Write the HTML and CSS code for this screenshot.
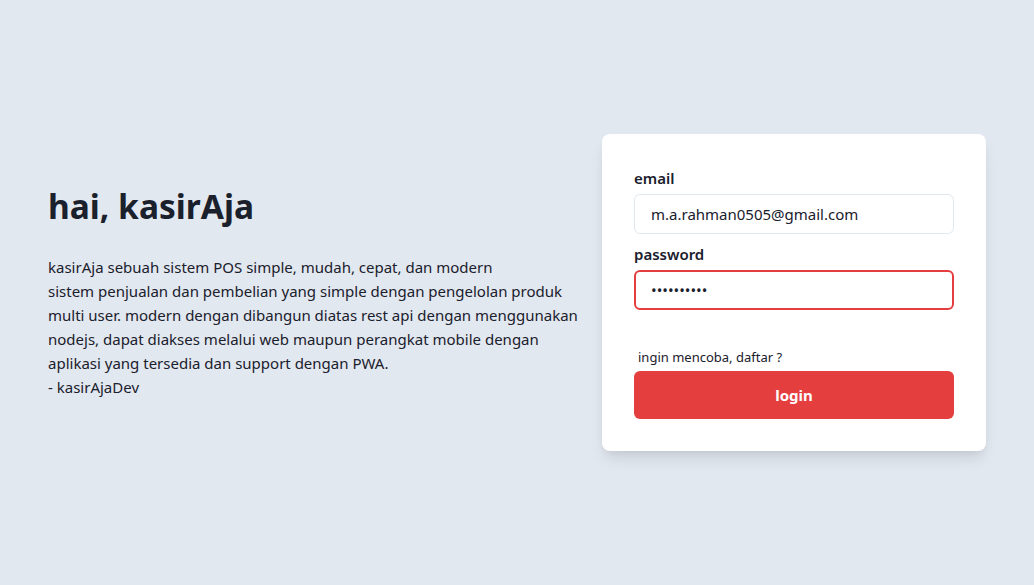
FILE: index.html
```html
<!DOCTYPE html>
<html lang="id">
<head>
<meta charset="utf-8">
<title>kasirAja - login</title>
<link rel="stylesheet" href="styles.css">
</head>
<body>
<main class="page">
  <section class="intro">
    <h1 class="intro-title">hai, kasirAja</h1>
    <p class="intro-text">kasirAja sebuah sistem POS simple, mudah, cepat, dan modern<br>sistem penjualan dan pembelian yang simple dengan pengelolan produk<br>multi user. modern dengan dibangun diatas rest api dengan menggunakan<br>nodejs, dapat diakses melalui web maupun perangkat mobile dengan<br>aplikasi yang tersedia dan support dengan PWA.<br>- kasirAjaDev</p>
  </section>
  <form class="card">
    <label class="field-label" for="email">email</label>
    <input class="field-input" id="email" type="email" value="m.a.rahman0505@gmail.com">
    <label class="field-label field-label-gap" for="password">password</label>
    <input class="field-input field-input-focus" id="password" type="password" value="1234567890" autofocus>
    <p class="register">ingin mencoba, daftar ?</p>
    <button class="btn-login" type="button">login</button>
  </form>
</main>
</body>
</html>
```
FILE: styles.css
```css
* { box-sizing: border-box; }
html, body { margin: 0; padding: 0; }
body {
  background: #e2e8f0;
  font-family: "Noto Sans", "Open Sans", sans-serif;
  color: #1a202c;
}
.page {
  min-height: 585px;
  display: flex;
  align-items: center;
  justify-content: space-between;
  padding: 0 48px;
}
.intro { display: flex; flex-direction: column; }
.intro-title {
  margin: 0;
  font-size: 33.5px;
  line-height: 40px;
  font-weight: 700;
  color: #1a202c;
}
.intro-text {
  margin: 29px 0 0;
  font-size: 15px;
  line-height: 24px;
  white-space: nowrap;
  color: #1a202c;
}
.card {
  width: 384px;
  flex-shrink: 0;
  background: #fff;
  border-radius: 8px;
  padding: 32px;
  display: flex;
  flex-direction: column;
  box-shadow: 0 10px 15px -3px rgba(0,0,0,0.1), 0 4px 6px -2px rgba(0,0,0,0.05);
}
.field-label {
  font-size: 15px;
  line-height: 24px;
  font-weight: 600;
  color: #1a202c;
  margin-bottom: 4px;
}
.field-label-gap { margin-top: 8px; }
.field-input {
  height: 40px;
  border: 1px solid #e2e8f0;
  border-radius: 6px;
  padding: 0 16px;
  font-family: inherit;
  font-size: 15px;
  color: #1a202c;
  background: #fff;
  outline: none;
  caret-color: #000;
}
.field-input-focus {
  border: 2px solid #e53e3e;
  padding: 0 15px;
}
.register {
  margin: 37px 0 4px;
  padding-left: 4px;
  font-size: 13px;
  line-height: 20px;
  color: #1a202c;
}
.btn-login {
  height: 48px;
  border: none;
  border-radius: 6px;
  background: #e53e3e;
  color: #fff;
  font-family: inherit;
  font-size: 15px;
  font-weight: 700;
}
```
